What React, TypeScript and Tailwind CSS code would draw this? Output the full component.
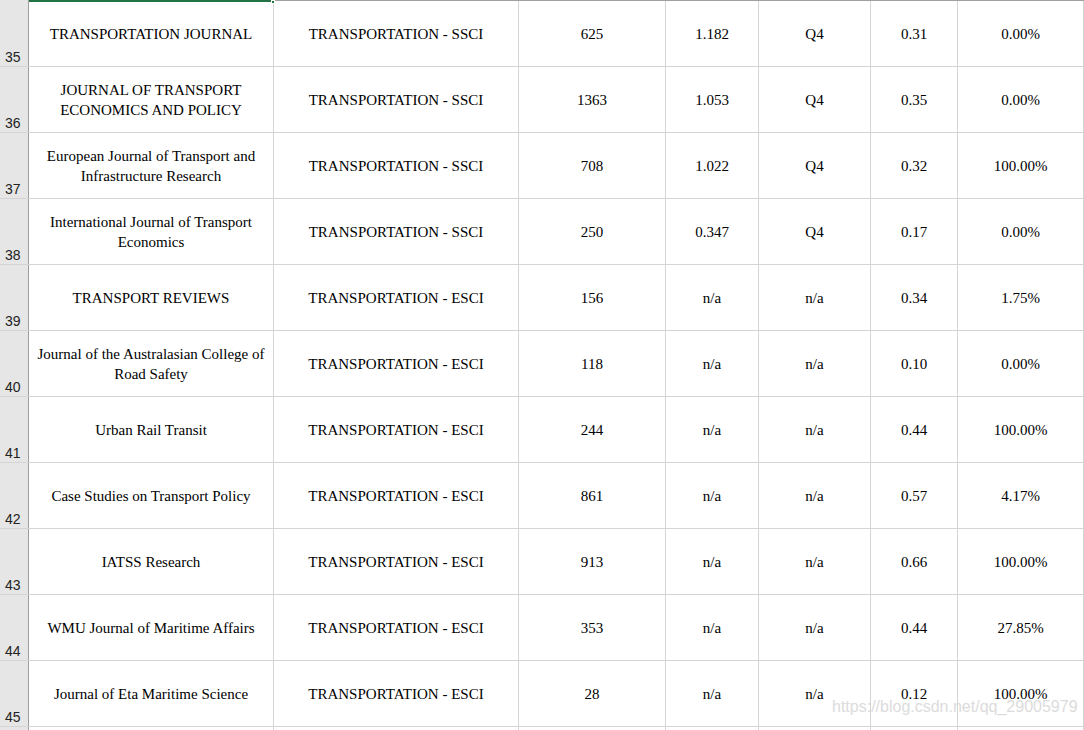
import * as React from 'react';

type Row = {
  n: number;
  title: string[];
  cat: string;
  cites: string;
  jif: string;
  q: string;
  jci: string;
  oa: string;
};

const rows: Row[] = [
  { n: 35, title: ['TRANSPORTATION JOURNAL'], cat: 'TRANSPORTATION - SSCI', cites: '625', jif: '1.182', q: 'Q4', jci: '0.31', oa: '0.00%' },
  { n: 36, title: ['JOURNAL OF TRANSPORT', 'ECONOMICS AND POLICY'], cat: 'TRANSPORTATION - SSCI', cites: '1363', jif: '1.053', q: 'Q4', jci: '0.35', oa: '0.00%' },
  { n: 37, title: ['European Journal of Transport and', 'Infrastructure Research'], cat: 'TRANSPORTATION - SSCI', cites: '708', jif: '1.022', q: 'Q4', jci: '0.32', oa: '100.00%' },
  { n: 38, title: ['International Journal of Transport', 'Economics'], cat: 'TRANSPORTATION - SSCI', cites: '250', jif: '0.347', q: 'Q4', jci: '0.17', oa: '0.00%' },
  { n: 39, title: ['TRANSPORT REVIEWS'], cat: 'TRANSPORTATION - ESCI', cites: '156', jif: 'n/a', q: 'n/a', jci: '0.34', oa: '1.75%' },
  { n: 40, title: ['Journal of the Australasian College of', 'Road Safety'], cat: 'TRANSPORTATION - ESCI', cites: '118', jif: 'n/a', q: 'n/a', jci: '0.10', oa: '0.00%' },
  { n: 41, title: ['Urban Rail Transit'], cat: 'TRANSPORTATION - ESCI', cites: '244', jif: 'n/a', q: 'n/a', jci: '0.44', oa: '100.00%' },
  { n: 42, title: ['Case Studies on Transport Policy'], cat: 'TRANSPORTATION - ESCI', cites: '861', jif: 'n/a', q: 'n/a', jci: '0.57', oa: '4.17%' },
  { n: 43, title: ['IATSS Research'], cat: 'TRANSPORTATION - ESCI', cites: '913', jif: 'n/a', q: 'n/a', jci: '0.66', oa: '100.00%' },
  { n: 44, title: ['WMU Journal of Maritime Affairs'], cat: 'TRANSPORTATION - ESCI', cites: '353', jif: 'n/a', q: 'n/a', jci: '0.44', oa: '27.85%' },
  { n: 45, title: ['Journal of Eta Maritime Science'], cat: 'TRANSPORTATION - ESCI', cites: '28', jif: 'n/a', q: 'n/a', jci: '0.12', oa: '100.00%' },
];

function Cell({ w, children }: { w: string; children: React.ReactNode }) {
  return (
    <div className={`${w} shrink-0 h-full border-r border-[#d4d4d4] flex flex-col items-center justify-center text-center leading-[20px] whitespace-nowrap`}>
      {children}
    </div>
  );
}

export default function App() {
  return (
    <div className="relative w-[1084px] h-[730px] overflow-hidden bg-white text-[15px] text-black" style={{ fontFamily: '"Liberation Serif", "Times New Roman", serif' }}>
      {/* top edge with selection bar over column A */}
      <div className="flex h-px">
        <div className="w-[29px] bg-[#e6e6e6] border-r border-[#9e9e9e]" />
        <div className="w-[245px] bg-[#217346]" />
        <div className="flex-1 bg-[#a0a0a0]" />
      </div>
      <div className="absolute left-[29px] top-0 w-[244px] h-[2px] bg-[#217346]" />
      <div className="absolute left-[271px] top-0 w-[4px] h-[4px] bg-[#217346] border border-white" />

      {rows.map((r) => (
        <div key={r.n} className="flex h-[66px] border-b border-[#d4d4d4]">
          <div className="w-[29px] shrink-0 h-full bg-[#e6e6e6] border-r border-[#9e9e9e] flex items-end pl-[5px] pb-px text-[14px] leading-[16px] text-[#222]" style={{ fontFamily: '"Liberation Sans", Arial, sans-serif' }}>
            {r.n}
          </div>
          <Cell w="w-[245px]">
            {r.title.map((t) => (
              <span key={t}>{t}</span>
            ))}
          </Cell>
          <Cell w="w-[245px]">{r.cat}</Cell>
          <Cell w="w-[147px]">{r.cites}</Cell>
          <Cell w="w-[93px]">{r.jif}</Cell>
          <Cell w="w-[112px]">{r.q}</Cell>
          <Cell w="w-[87px]">{r.jci}</Cell>
          <Cell w="w-[126px]">{r.oa}</Cell>
        </div>
      ))}
      <div className="flex h-[10px]">
        <div className="w-[29px] shrink-0 bg-[#e6e6e6] border-r border-[#9e9e9e]" />
        <div className="w-[245px] shrink-0 border-r border-[#d4d4d4]" />
        <div className="w-[245px] shrink-0 border-r border-[#d4d4d4]" />
        <div className="w-[147px] shrink-0 border-r border-[#d4d4d4]" />
        <div className="w-[93px] shrink-0 border-r border-[#d4d4d4]" />
        <div className="w-[112px] shrink-0 border-r border-[#d4d4d4]" />
        <div className="w-[87px] shrink-0 border-r border-[#d4d4d4]" />
        <div className="w-[126px] shrink-0 border-r border-[#d4d4d4]" />
      </div>

      <div className="absolute left-[832px] top-[696px] text-[16px] leading-[22px] text-[#dcdcdc] pointer-events-none whitespace-nowrap" style={{ fontFamily: '"Liberation Sans", Arial, sans-serif' }}>
        https://blog.csdn.net/qq_29005979
      </div>
    </div>
  );
}
